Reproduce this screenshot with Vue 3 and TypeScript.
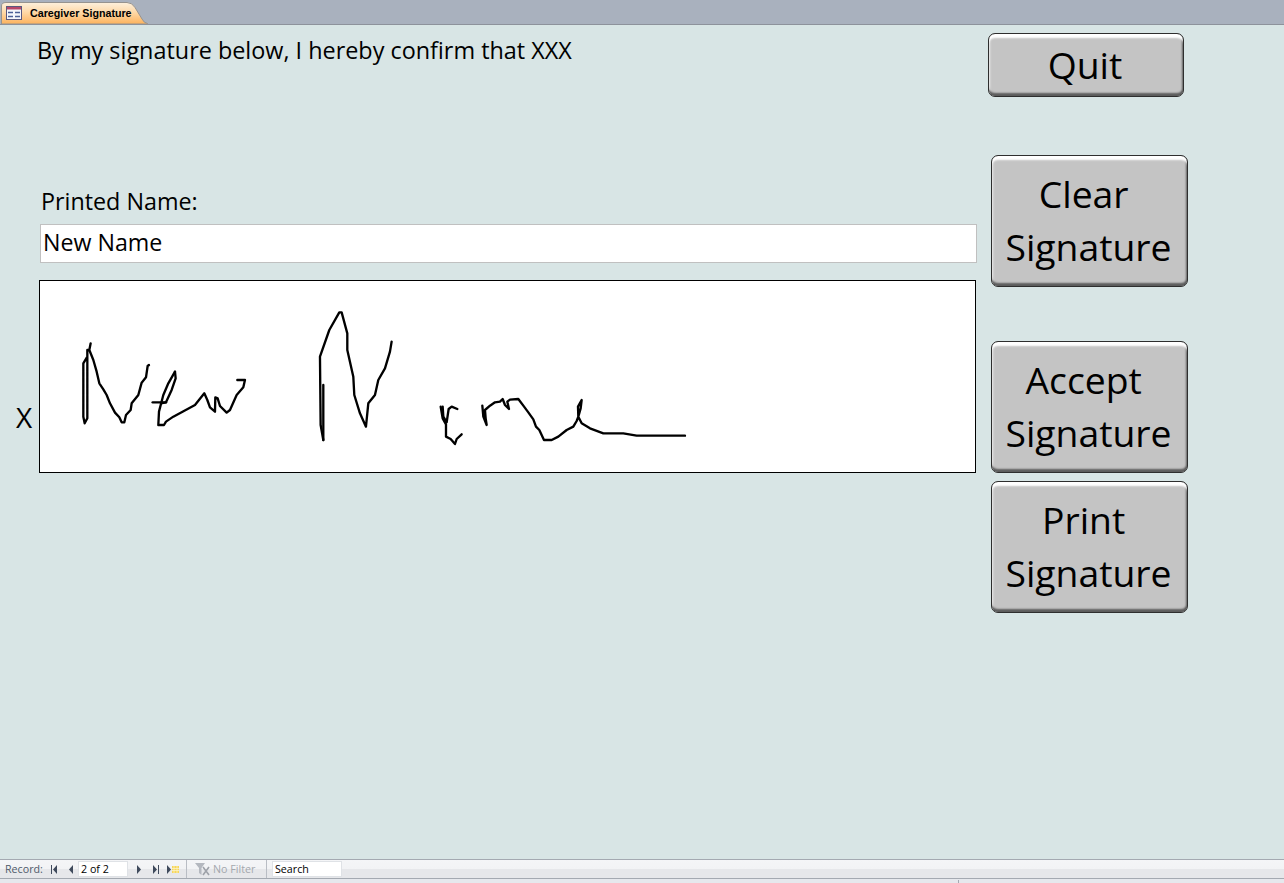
<script setup lang="ts">
type Stroke = number[][];
const firstHalf: Stroke[] = [
  [[92,130],[88,150],[82,150],[82,170],[70,190],[70,350],[74,370],[82,355],[82,150],[88,150],[100,180],[110,215],[118,250],[130,268],[140,285],[150,310],[165,338],[178,352],[185,367],[193,367],[198,345],[212,330],[215,310],[235,285],[245,248],[258,232],[263,198],[267,195]],
  [[278,307],[318,307]],
  [[345,215],[325,250],[310,285],[297,335],[295,375],[312,375],[318,365],[340,350],[405,315],[433,280],[442,300],[450,322],[465,335],[466,292],[473,295],[480,318],[500,338],[510,330],[530,285],[550,262],[555,240],[532,240]],
  [[345,215],[347,235],[335,270],[318,307],[303,310]],
  [[790,420],[782,375],[780,170],[808,90],[838,37],[845,37],[862,100],[862,150],[880,230],[883,285],[900,340],[918,380],[925,310],[945,285],[955,240],[975,205],[990,155],[995,125]],
  [[790,255],[790,420]],
];
const secondHalf: Stroke[] = [
  [[62,65],[68,100],[78,118],[78,155],[92,162],[105,177],[110,162],[125,148]],
  [[68,65],[70,95],[80,112],[84,85],[86,72],[95,65],[112,72]],
  [[187,62],[190,95],[200,120],[197,100],[195,75],[210,62],[225,52],[240,50],[248,42],[255,60],[267,72],[262,50],[270,44],[295,42],[310,62],[325,82],[340,103],[348,125],[358,135],[372,165],[395,165],[415,155],[440,135],[460,125],[470,108],[475,95],[474,65],[485,45],[482,70],[475,95],[485,115],[510,130],[550,145],[610,145],[650,152],[795,152]],
];
const toPoints = (s: Stroke) => s.map((p) => p.join(",")).join(" ");
</script>

<template>
  <div class="app">
    <header class="tabbar">
      <div class="tab">
        <svg class="tabshape" width="148" height="24" viewBox="0 0 148 24">
          <defs>
            <linearGradient id="tabfill" x1="0" y1="0" x2="0" y2="1">
              <stop offset="0" stop-color="#fdf0dd"/>
              <stop offset=".45" stop-color="#fed9a8"/>
              <stop offset="1" stop-color="#fcb25c"/>
            </linearGradient>
          </defs>
          <path d="M1.5 24V6Q1.5 2.500 6 2.500H127Q132 2.500 135 7.500L142 19Q144 23 147.500 23.500V24Z" fill="url(#tabfill)" stroke="#96938f"/>
        </svg>
        <svg class="formicon" width="16" height="14" viewBox="0 0 16 14">
          <rect x=".5" y=".5" width="15" height="13" fill="#f4f6fb" stroke="#59597f"/>
          <rect x="1" y="1" width="14" height="2.500" fill="#b8476a"/>
          <path d="M2 6.500h5M2 10.500h5M9 6.500h5M9 10.500h5" stroke="#4a5f96" stroke-width="1.300"/>
        </svg>
        <span class="tabtext">Caregiver Signature</span>
      </div>
    </header>

    <main class="form">
      <section class="left">
        <p class="statement">By my signature below, I hereby confirm that XXX</p>
        <label class="namelabel">Printed Name:</label>
        <div class="namebox">New Name</div>
        <div class="sigrow">
          <span class="x">X</span>
          <div class="sigbox">
            <svg class="sig" width="935" height="191" viewBox="0 0 935 191">
              <g transform="translate(20 19) scale(.3333)">
                <polyline v-for="(s, i) in firstHalf" :key="i" :points="toPoints(s)"/>
              </g>
              <g transform="translate(380 104) scale(.3333)">
                <polyline v-for="(s, i) in secondHalf" :key="i" :points="toPoints(s)"/>
              </g>
            </svg>
          </div>
        </div>
      </section>
      <section class="right">
        <button class="btn quit">Quit</button>
        <button class="btn big clear">Clear&nbsp;<br>Signature</button>
        <button class="btn big accept">Accept&nbsp;<br>Signature</button>
        <button class="btn big print">Print&nbsp;<br>Signature</button>
      </section>
    </main>

    <footer class="navbar">
      <div class="nav">
        <span class="rec">Record:</span>
        <svg class="navicon first" width="7" height="9" viewBox="0 0 7 9"><path d="M0 0v9h1V0zM6 0v9L2 4.500z" fill="#3f4a5c"/></svg>
        <svg class="navicon prev" width="5" height="9" viewBox="0 0 5 9"><path d="M5 0v9L1 4.500z" fill="#3f4a5c"/></svg>
        <div class="current">2 of 2</div>
        <svg class="navicon next" width="5" height="9" viewBox="0 0 5 9"><path d="M0 0v9l4-4.500z" fill="#3f4a5c"/></svg>
        <svg class="navicon last" width="7" height="9" viewBox="0 0 7 9"><path d="M0 0v9l4-4.500zM5 0v9h1V0z" fill="#3f4a5c"/></svg>
        <svg class="navicon new" width="13" height="9" viewBox="0 0 13 9"><path d="M0 0v9l4-4.500z" fill="#3f4a5c"/><path d="M5 1h7v7H5z" fill="#f6d65a"/><path d="M7 1v7M10 1v7M5 3.500h7M5 5.500h7" stroke="#fdf3c4" stroke-width=".8"/></svg>
        <span class="sep s1"></span>
        <svg class="funnel" width="15" height="13" viewBox="0 0 15 13"><path d="M0 0h10L6.500 5v7L4 10V5z" fill="#b4b8bf"/><path d="M8 4l6 8M14 4l-6 8" stroke="#9ea2a9" stroke-width="1.600"/></svg>
        <span class="nofilter">No Filter</span>
        <span class="sep s2"></span>
        <div class="search">Search</div>
      </div>
      <div class="status"><span class="statusmark"></span></div>
    </footer>
  </div>
</template>

<style>
html, body { margin: 0; padding: 0; }
</style>

<style scoped>
.app {
  width: 1284px;
  height: 883px;
  display: flex;
  flex-direction: column;
  overflow: hidden;
  background: #d8e5e5;
  font-family: "Open Sans", "Noto Sans", sans-serif;
  color: #000;
}
.tabbar {
  height: 25px;
  box-sizing: border-box;
  background: #a9b1be;
  border-bottom: 1px solid #8d929b;
  display: flex;
  flex: none;
}
.tab {
  width: 148px;
  height: 24px;
  box-sizing: border-box;
  position: relative;
  padding: 6px 0 0 6px;
  display: flex;
  align-items: flex-start;
  gap: 8px;
  font-family: "Liberation Sans", sans-serif;
  font-size: 10.700px;
  font-weight: 700;
  line-height: 15px;
}
.tabshape {
  position: absolute;
  left: 0;
  top: 0;
}
.formicon, .tabtext { position: relative; }
.form {
  flex: 1;
  display: flex;
  min-height: 0;
}
.left {
  width: 988px;
  flex: none;
  box-sizing: border-box;
  padding-left: 16px;
}
.statement {
  margin: 9px 0 0 21px;
  font-size: 23.400px;
  line-height: 32px;
  white-space: nowrap;
}
.namelabel {
  display: block;
  margin: 119px 0 0 25px;
  font-size: 23.300px;
  line-height: 32px;
}
.namebox {
  margin: 7px 0 0 24px;
  width: 937px;
  height: 39px;
  box-sizing: border-box;
  background: #fff;
  border: 1px solid #c0c0c0;
  padding: 0 2px;
  font-size: 23.200px;
  line-height: 35px;
}
.sigrow {
  display: flex;
  align-items: flex-end;
  margin-top: 17px;
}
.x {
  width: 23px;
  height: 34px;
  margin-bottom: 39px;
  font-size: 28px;
  line-height: 34px;
}
.sigbox {
  width: 937px;
  height: 193px;
  box-sizing: border-box;
  background: #fff;
  border: 1px solid #000;
}
.sig { display: block; }
.sig polyline {
  fill: none;
  stroke: #000;
  stroke-width: 7;
  stroke-linejoin: round;
  stroke-linecap: round;
}
.right {
  display: flex;
  flex-direction: column;
  align-items: flex-start;
  padding-left: 3px;
}
.btn {
  display: block;
  width: 197px;
  padding: 0 2px 2px 0;
  box-sizing: border-box;
  background: #c4c4c4;
  border: 1px solid #2e2e2e;
  border-radius: 7px;
  box-shadow: inset 0 5px 2px -1px #fff, inset 0 -4px 2px -1px #5c5c5c, inset 3px 0 2px -2px #f2f2f2, inset -3px 0 2px -2px #5c5c5c;
  font-family: inherit;
  color: #000;
  font-size: 37.300px;
  line-height: 53px;
  white-space: nowrap;
}
.quit {
  width: 196px;
  height: 64px;
  margin: 8px 0 0 -3px;
}
.big { height: 132px; }
.clear { margin-top: 58px; }
.accept { margin-top: 54px; }
.print { margin-top: 8px; }
.navbar {
  flex: none;
  height: 24px;
  display: flex;
  flex-direction: column;
}
.nav {
  height: 20px;
  box-sizing: border-box;
  border-top: 1px solid #a4a9b1;
  border-bottom: 1px solid #a4a9b1;
  background: linear-gradient(#f4f5f7, #f2f3f5 50%, #e6e7ea 50%);
  display: flex;
  align-items: center;
  font-family: "Open Sans", sans-serif;
  font-size: 10.700px;
  color: #000;
}
.rec { margin-left: 5px; width: 46px; color: #4f5b6b; white-space: nowrap; }
.navicon { flex: none; }
.first { margin-right: 10px; }
.prev { margin-right: 5px; }
.current {
  width: 50px;
  height: 16px;
  box-sizing: border-box;
  background: #fff;
  border: 1px solid #dfe2e6;
  padding-left: 2px;
  line-height: 14px;
  flex: none;
}
.next { margin-left: 9px; }
.last { margin-left: 11px; }
.new { margin-left: 7px; }
.sep {
  width: 1px;
  height: 18px;
  background: #b9bdc4;
  flex: none;
}
.s1 { margin-left: 6px; }
.funnel { margin-left: 8px; flex: none; }
.nofilter { margin-left: 3px; color: #a4a8ae; width: 53px; white-space: nowrap; }
.search {
  width: 70px;
  height: 16px;
  margin-left: 5px;
  box-sizing: border-box;
  background: #fff;
  border: 1px solid #dfe2e6;
  padding-left: 2px;
  line-height: 14px;
  flex: none;
}
.status {
  flex: 1;
  background: #e6e8ed;
  position: relative;
}
.statusmark {
  position: absolute;
  left: 958px;
  bottom: 0;
  width: 1px;
  height: 3px;
  background: #a4a9b1;
}
</style>
